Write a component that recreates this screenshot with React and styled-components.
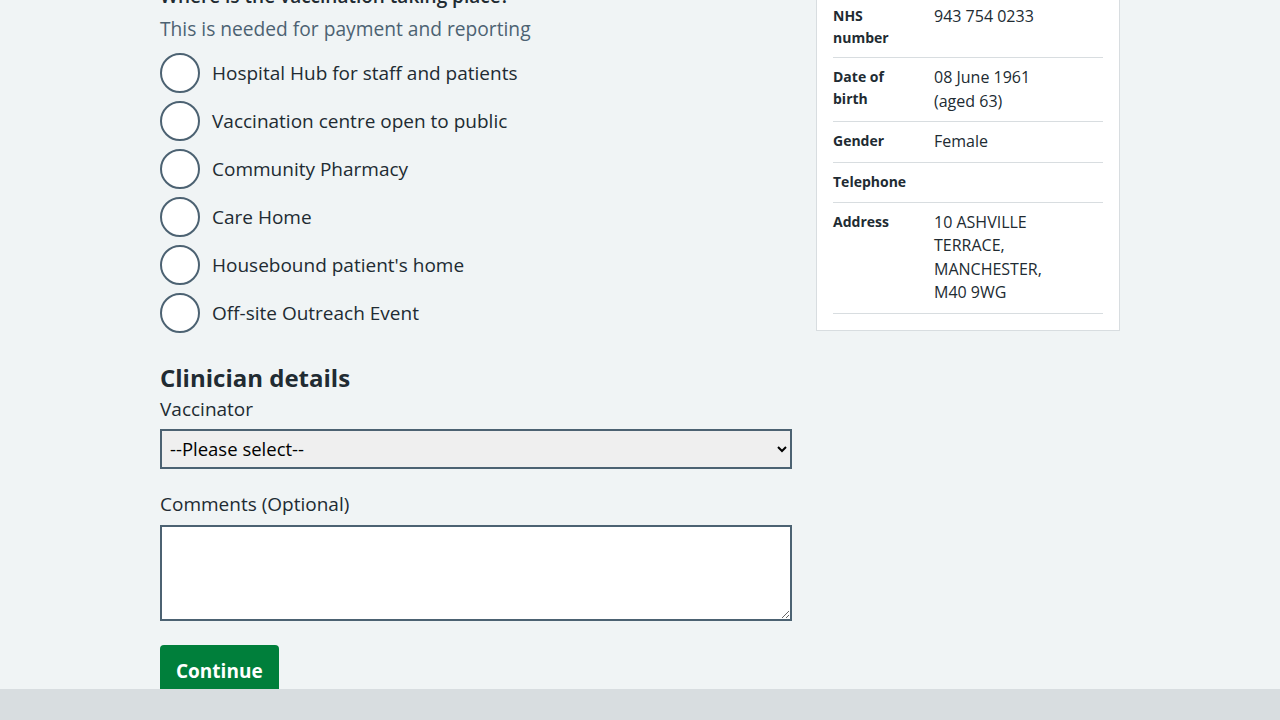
import styled, { createGlobalStyle } from "styled-components";

const GlobalStyle = createGlobalStyle`
  body {
    margin: 0;
    background: #f0f4f5;
    font-family: "Open Sans", Lato, sans-serif;
    color: #212b32;
  }
`;

const Page = styled.main`
  width: 960px;
  margin: -18px auto 0;
  display: grid;
  grid-template-columns: 632px 304px;
  column-gap: 24px;
  align-items: start;
`;

const Form = styled.form`
  display: flex;
  flex-direction: column;
`;

const Legend = styled.h2`
  margin: 0 0 4px;
  font-size: 19px;
  line-height: 29px;
  font-weight: 600;
`;

const Hint = styled.div`
  margin-bottom: 10px;
  font-size: 19.2px;
  line-height: 28px;
  color: #4c6272;
`;

const RadioList = styled.div`
  display: flex;
  flex-direction: column;
  gap: 8px;
`;

const RadioItem = styled.label`
  display: flex;
  align-items: center;
  gap: 12px;
  font-size: 19px;
  line-height: 28px;
  cursor: pointer;
`;

const RadioInput = styled.input`
  appearance: none;
  width: 40px;
  height: 40px;
  margin: 0;
  border: 2px solid #4c6272;
  border-radius: 50%;
  background: #ffffff;
  box-sizing: border-box;
`;

const SectionTitle = styled.h2`
  margin: 29px 0 3px;
  font-size: 24px;
  line-height: 32px;
  font-weight: 700;
`;

const Label = styled.label`
  display: block;
  margin-bottom: ${({ $mb }) => $mb}px;
  font-size: 19px;
  line-height: 24px;
`;

const Field = styled.div`
  margin-bottom: ${({ $gap }) => $gap}px;
`;

const Select = styled.select`
  width: 100%;
  height: 40px;
  padding: 0 4px 2px;
  border: 2px solid #4c6272;
  border-radius: 0;
  background-color: #efefef;
  font-family: inherit;
  font-size: 18.5px;
  color: #000;
  box-sizing: border-box;
`;

const TextArea = styled.textarea`
  display: block;
  width: 100%;
  height: 96px;
  padding: 4px;
  border: 2px solid #4c6272;
  border-radius: 0;
  background: #ffffff;
  font-family: inherit;
  font-size: 19px;
  box-sizing: border-box;
`;

const Button = styled.button`
  align-self: flex-start;
  padding: 12px 16px;
  border: 0;
  border-radius: 4px;
  background: #007f3b;
  box-shadow: 0 4px 0 #00401e;
  color: #ffffff;
  font-family: inherit;
  font-size: 19px;
  font-weight: 700;
  line-height: 28px;
  cursor: pointer;
`;

const Card = styled.aside`
  margin-top: -2px;
  background: #ffffff;
  border: 1px solid #d8dde0;
  padding: 16px;
`;

const SummaryList = styled.dl`
  margin: 0;
`;

const SummaryRow = styled.div`
  display: grid;
  grid-template-columns: 101px 1fr;
  padding: 8px 0;
  border-bottom: 1px solid #d8dde0;
`;

const Key = styled.dt`
  font-size: 14px;
  line-height: 22px;
  font-weight: 700;
  padding-right: 16px;
`;

const Value = styled.dd`
  margin: 0;
  min-height: 23px;
  font-size: 16px;
  line-height: 23.5px;
  padding-right: 50px;
`;

const Footer = styled.footer`
  position: fixed;
  left: 0;
  right: 0;
  bottom: 0;
  height: 31px;
  background: #d8dde0;
`;

const places = [
  "Hospital Hub for staff and patients",
  "Vaccination centre open to public",
  "Community Pharmacy",
  "Care Home",
  "Housebound patient's home",
  "Off-site Outreach Event",
];

const patient = [
  { key: "NHS number", value: "943 754 0233" },
  { key: "Date of birth", value: "08 June 1961 (aged 63)" },
  { key: "Gender", value: "Female" },
  { key: "Telephone", value: "" },
  { key: "Address", value: "10 ASHVILLE TERRACE, MANCHESTER, M40 9WG" },
];

export default function App() {
  return (
    <>
      <GlobalStyle />
      <Page>
        <Form onSubmit={(e) => e.preventDefault()}>
          <Legend>Where is the vaccination taking place?</Legend>
          <Hint>This is needed for payment and reporting</Hint>
          <RadioList>
            {places.map((place) => (
              <RadioItem key={place}>
                <RadioInput type="radio" name="place" value={place} />
                {place}
              </RadioItem>
            ))}
          </RadioList>
          <SectionTitle>Clinician details</SectionTitle>
          <Field $gap={23}>
            <Label htmlFor="vaccinator" $mb={8}>
              Vaccinator
            </Label>
            <Select id="vaccinator" defaultValue="">
              <option value="">--Please select--</option>
            </Select>
          </Field>
          <Field $gap={24}>
            <Label htmlFor="comments" $mb={9}>
              Comments (Optional)
            </Label>
            <TextArea id="comments" />
          </Field>
          <Button type="submit">Continue</Button>
        </Form>
        <Card>
          <SummaryList>
            {patient.map(({ key, value }) => (
              <SummaryRow key={key}>
                <Key>{key}</Key>
                <Value>{value}</Value>
              </SummaryRow>
            ))}
          </SummaryList>
        </Card>
      </Page>
      <Footer />
    </>
  );
}
